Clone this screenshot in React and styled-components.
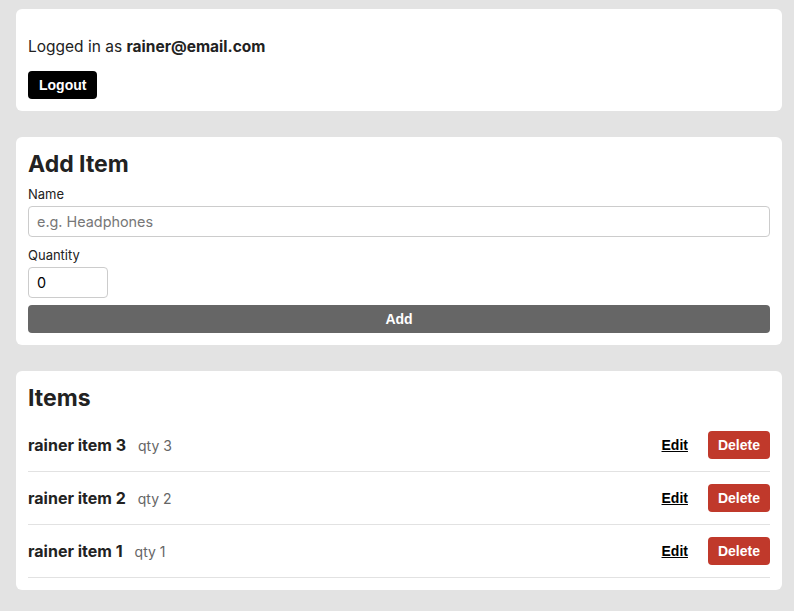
import React from 'react'
import styled, { createGlobalStyle } from 'styled-components'

const GlobalStyle = createGlobalStyle`
  * { box-sizing: border-box; }
  body {
    margin: 0;
    background: #e3e3e3;
    font-family: 'Inter', 'Liberation Sans', sans-serif;
    color: #222;
  }
`;

const items = [
  { id: 3, name: 'rainer item 3', qty: 3 },
  { id: 2, name: 'rainer item 2', qty: 2 },
  { id: 1, name: 'rainer item 1', qty: 1 },
];

export default function App() {
  return (
    <Page>
      <GlobalStyle />
      <Card>
        <Welcome>Logged in as <strong>rainer@email.com</strong></Welcome>
        <Button $bg="#000">Logout</Button>
      </Card>

      <Card>
        <Title>Add Item</Title>
        <Label>Name</Label>
        <Input placeholder="e.g. Headphones" />
        <Label>Quantity</Label>
        <Input $small type="number" defaultValue={0} />
        <Button $bg="#666" $full>Add</Button>
      </Card>

      <Card>
        <Title>Items</Title>
        <List>
          {items.map((item) => (
            <Row key={item.id}>
              <ItemName>{item.name}</ItemName>
              <Qty>qty {item.qty}</Qty>
              <Actions>
                <EditLink>Edit</EditLink>
                <Button $bg="#c0392b" $narrow>Delete</Button>
              </Actions>
            </Row>
          ))}
        </List>
      </Card>
    </Page>
  )
}

const Page = styled.div`
  display: flex;
  flex-direction: column;
  gap: 26px;
  padding: 9px 12px 20px 16px;
`;

const Card = styled.div`
  background: #fff;
  border-radius: 6px;
  padding: 12px;
  display: flex;
  flex-direction: column;
  align-items: flex-start;
`;

const Welcome = styled.p`
  margin: 17px 0 0;
  font-size: 15.5px;
  line-height: 18px;

  strong {
    font-weight: 700;
  }
`;

const Button = styled.button`
  background: ${(p) => p.$bg};
  color: #fff;
  border: 0;
  border-radius: 4px;
  height: 28px;
  padding: 0 ${(p) => (p.$narrow ? '10px' : '11px')};
  font-family: 'Liberation Sans', Arial, sans-serif;
  font-weight: 700;
  font-size: 14px;
  cursor: pointer;
  align-self: ${(p) => (p.$full ? 'stretch' : 'auto')};

  ${Welcome} + & {
    margin-top: 15px;
  }
`;

const Title = styled.h2`
  margin: 0;
  font-size: 23px;
  line-height: 30px;
  font-weight: 700;
  color: #222;
`;

const Label = styled.label`
  font-size: 13px;
  line-height: 16px;
  margin: 7px 0 4px;
`;

const Input = styled.input`
  width: ${(p) => (p.$small ? '80px' : '100%')};
  height: 31px;
  border: 1px solid #ccc;
  border-radius: 4px;
  padding: 0 8px;
  font-family: 'Inter', 'Liberation Sans', sans-serif;
  font-size: 14.4px;
  color: #000;
  margin-bottom: 3px;
  appearance: textfield;

  &::placeholder {
    color: #777;
  }

  &::-webkit-inner-spin-button,
  &::-webkit-outer-spin-button {
    -webkit-appearance: none;
    margin: 0;
  }

  & + ${Button} {
    margin-top: 4px;
  }
`;

const List = styled.div`
  align-self: stretch;
  display: flex;
  flex-direction: column;
  margin-top: 6px;
`;

const Row = styled.div`
  display: flex;
  align-items: center;
  height: 53px;
  border-bottom: 1px solid #e2e2e2;
`;

const ItemName = styled.span`
  font-size: 16px;
  font-weight: 700;
  color: #222;
`;

const Qty = styled.span`
  font-size: 14px;
  color: #666;
  margin-left: 12px;
`;

const Actions = styled.div`
  margin-left: auto;
  display: flex;
  align-items: center;
  gap: 20px;
`;

const EditLink = styled.a`
  font-family: 'Liberation Sans', Arial, sans-serif;
  font-size: 14px;
  font-weight: 700;
  color: #000;
  text-decoration: underline;
  cursor: pointer;
`;
